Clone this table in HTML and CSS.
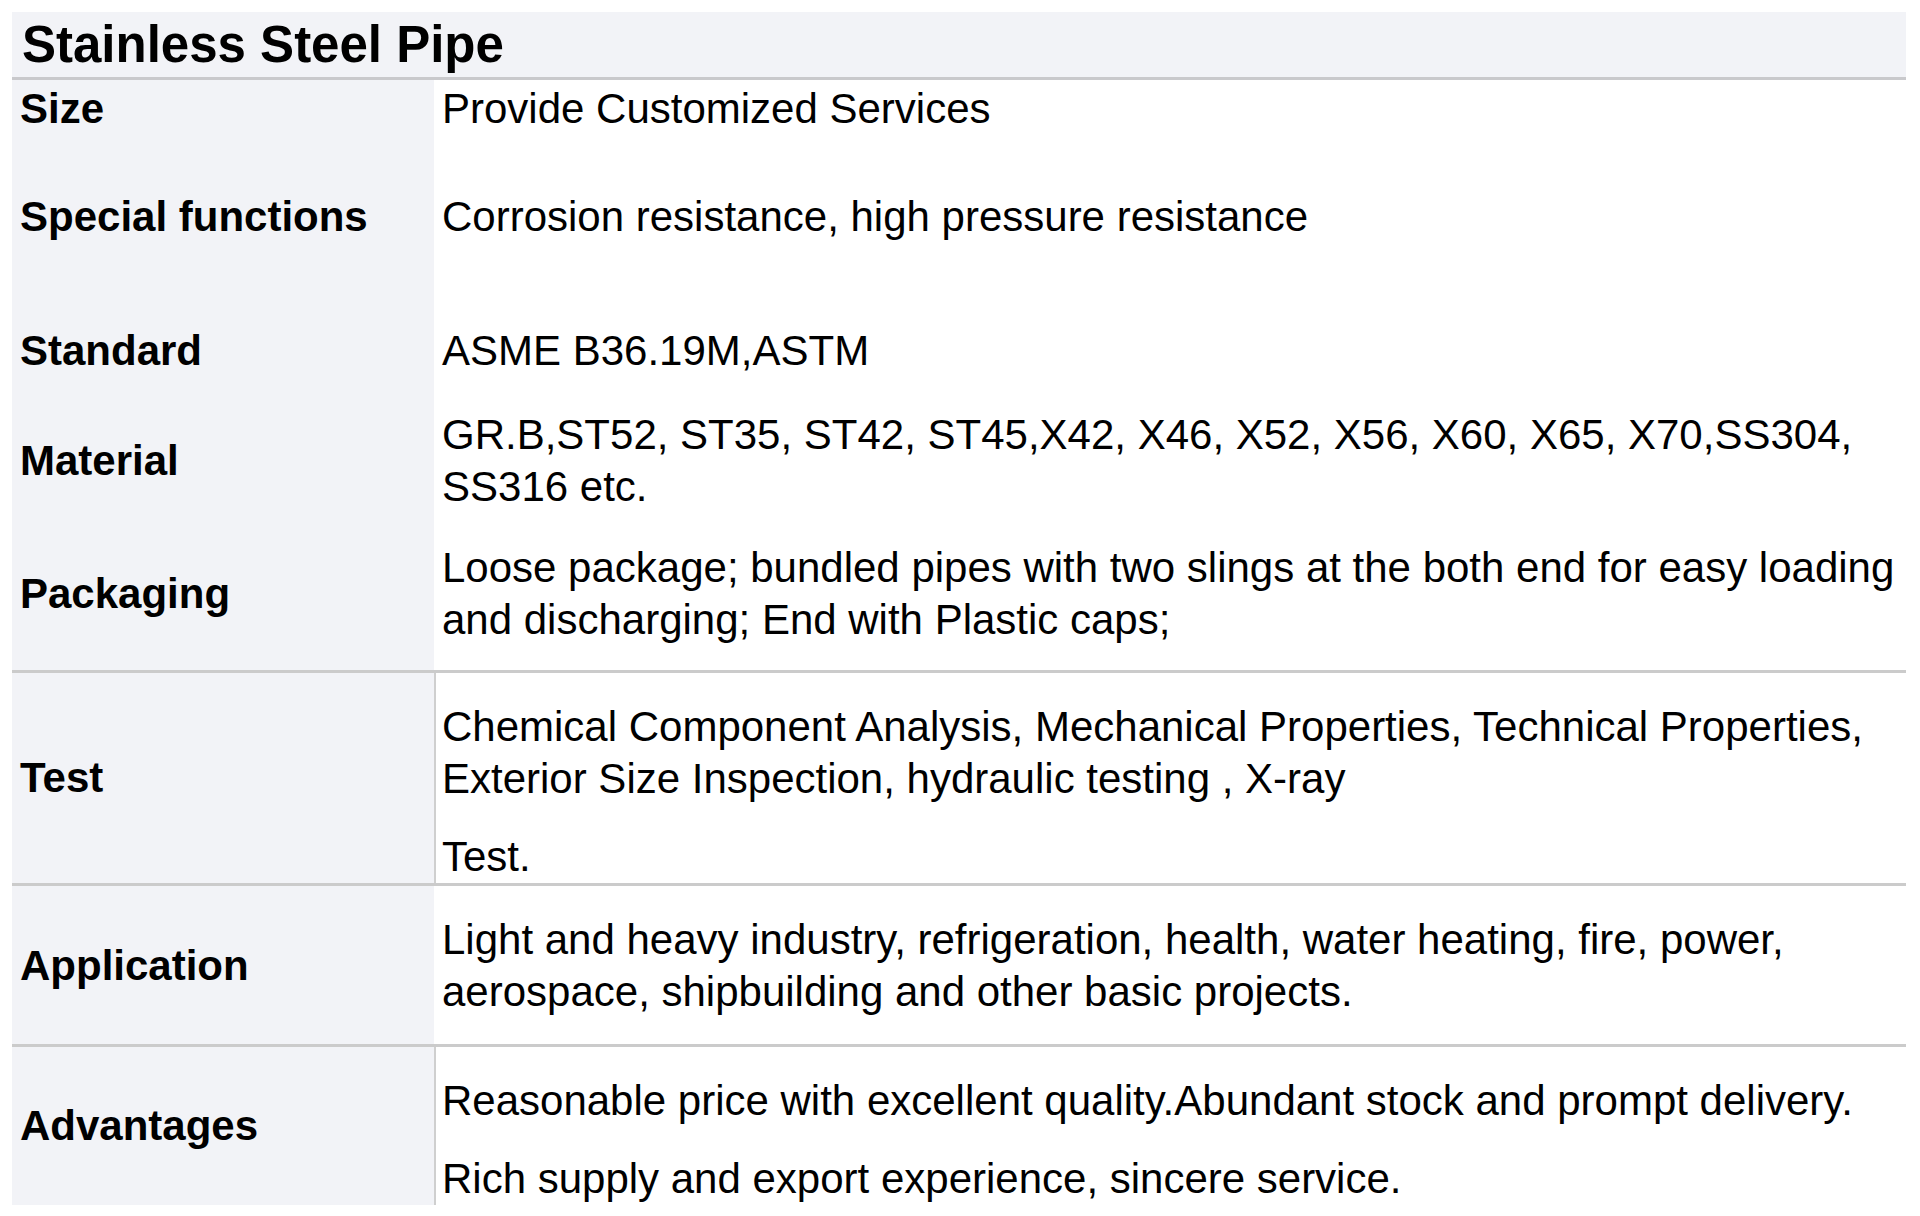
FILE: index.html
```html
<!DOCTYPE html>
<html lang="en">
<head>
<meta charset="utf-8">
<title>Stainless Steel Pipe</title>
<link rel="stylesheet" href="styles.css">
</head>
<body>
<div class="sheet">
  <div class="title">Stainless Steel Pipe</div>

  <div class="row r-size">
    <div class="label">Size</div>
    <div class="value"><p>Provide Customized Services</p></div>
  </div>

  <div class="row r-special">
    <div class="label">Special functions</div>
    <div class="value"><p>Corrosion resistance, high pressure resistance</p></div>
  </div>

  <div class="row r-standard">
    <div class="label">Standard</div>
    <div class="value"><p>ASME B36.19M,ASTM</p></div>
  </div>

  <div class="row r-material">
    <div class="label">Material</div>
    <div class="value"><p>GR.B,ST52, ST35, ST42, ST45,X42, X46, X52, X56, X60, X65, X70,SS304,<br>SS316 etc.</p></div>
  </div>

  <div class="row r-packaging">
    <div class="label">Packaging</div>
    <div class="value"><p>Loose package; bundled pipes with two slings at the both end for easy loading<br>and discharging; End with Plastic caps;</p></div>
  </div>

  <div class="row ruled split r-test">
    <div class="label">Test</div>
    <div class="value">
      <p>Chemical Component Analysis, Mechanical Properties, Technical Properties,<br>Exterior Size Inspection, hydraulic testing , X-ray</p>
      <p>Test.</p>
    </div>
  </div>

  <div class="row ruled r-application">
    <div class="label">Application</div>
    <div class="value"><p>Light and heavy industry, refrigeration, health, water heating, fire, power,<br>aerospace, shipbuilding and other basic projects.</p></div>
  </div>

  <div class="row ruled split r-advantages">
    <div class="label">Advantages</div>
    <div class="value">
      <p>Reasonable price with excellent quality.Abundant stock and prompt delivery.</p>
      <p>Rich supply and export experience, sincere service.</p>
    </div>
  </div>
</div>
</body>
</html>
```

FILE: styles.css
```css
html, body {
  margin: 0;
  padding: 0;
  background: #ffffff;
}

body {
  font-family: "Liberation Sans", Arial, sans-serif;
  color: #000;
}

.sheet {
  margin: 12px 0 0 12px;
  width: 1894px;
}

.title {
  height: 65px;
  line-height: 66px;
  padding-left: 10px;
  font-size: 51px;
  font-weight: bold;
  background: #f2f3f7;
  border-bottom: 3px solid #c9c9cc;
}

.row {
  display: grid;
  grid-template-columns: 422px 1fr;
  --pt: 0px;
  --pb: 0px;
}

.row.ruled {
  border-top: 3px solid #cbcbcb;
}

.label {
  display: flex;
  align-items: center;
  background: #f2f3f7;
  padding: var(--pt) 8px var(--pb) 8px;
  font-size: 42px;
  line-height: 52px;
  font-weight: bold;
}

.value {
  padding: var(--pt) 8px var(--pb) 8px;
  font-size: 42px;
  line-height: 52px;
}

.value p {
  margin: 0;
  white-space: nowrap;
}

.value p + p {
  margin-top: 26px;
}

.split .label {
  padding-top: 0;
  padding-bottom: 0;
}

.split .value {
  border-left: 2px solid #cfcfcf;
  padding-left: 6px;
}

.r-size { --pt: 3px; --pb: 28px; }
.r-special { --pt: 28px; --pb: 41px; }
.r-standard { --pt: 41px; --pb: 16px; }
.r-material { --pt: 16px; --pb: 14px; }
.r-packaging { --pt: 15px; --pb: 24px; }
.r-test { --pt: 28px; --pb: 0px; }
.r-application { --pt: 28px; --pb: 26px; }
.r-advantages { --pt: 28px; --pb: 0px; }
```
